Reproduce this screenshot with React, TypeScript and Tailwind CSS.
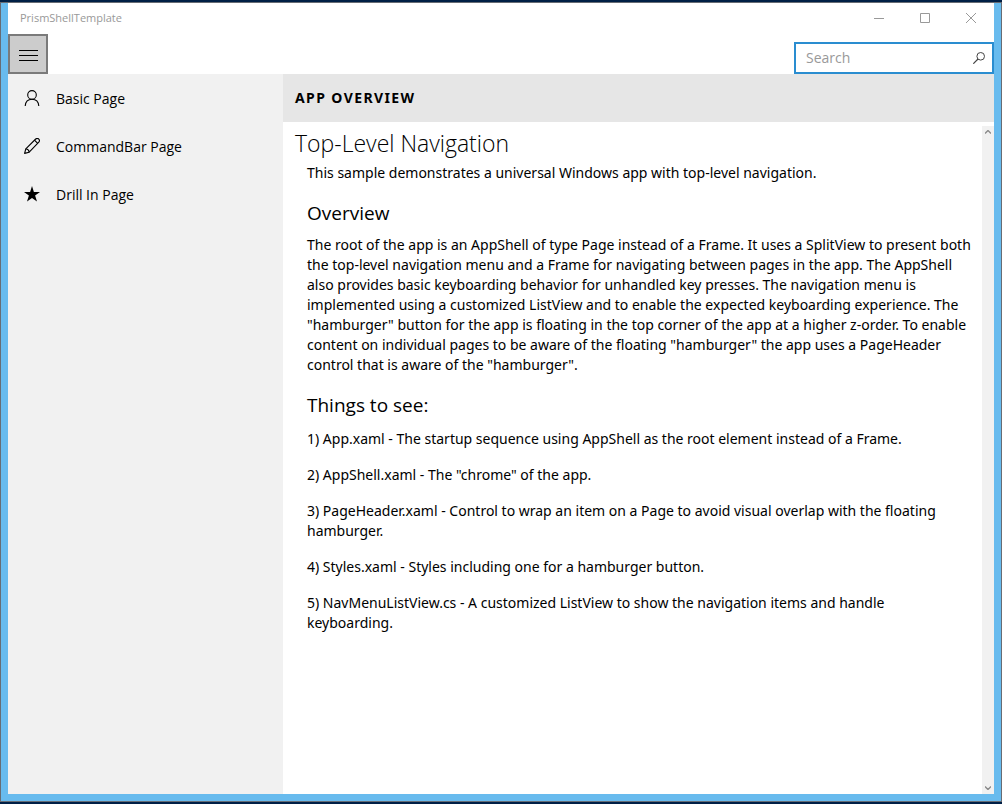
import type { ReactNode } from "react";

const navItems: { label: string; icon: ReactNode }[] = [
  {
    label: "Basic Page",
    icon: (
      <svg viewBox="0 0 16 16" className="size-4" fill="none" stroke="black" strokeWidth="1.1">
        <circle cx="8" cy="4.9" r="4.3" />
        <path d="M1.2 16C1.5 12 4.2 9.3 8 9.3s6.5 2.7 6.8 6.7" />
      </svg>
    ),
  },
  {
    label: "CommandBar Page",
    icon: (
      <svg viewBox="0 0 16 16" className="size-4" fill="none" stroke="black" strokeWidth="1.1" strokeLinejoin="round">
        <path d="M.6 15.4l1.2-4.6L11.7 1c1-.8 2.3-.7 3.100.1s.8 2.100 0 3.100L5.200 14.200z" />
        <path d="M10.500 2.200l3.200 3.200M1.800 10.800c1.800.2 3.200 1.600 3.400 3.400" />
      </svg>
    ),
  },
  {
    label: "Drill In Page",
    icon: (
      <svg viewBox="0 0 16 16" className="size-4" fill="black">
        <path d="M8 0l1.900 5.900H16l-4.900 3.700L13 15.600l-5-3.700-5 3.700 1.900-6L0 5.900h6.100z" />
      </svg>
    ),
  },
];

const overviewLines = [
  "The root of the app is an AppShell of type Page instead of a Frame. It uses a SplitView to present both",
  "the top-level navigation menu and a Frame for navigating between pages in the app. The AppShell",
  "also provides basic keyboarding behavior for unhandled key presses. The navigation menu is",
  "implemented using a customized ListView and to enable the expected keyboarding experience. The",
  '"hamburger" button for the app is floating in the top corner of the app at a higher z-order. To enable',
  'content on individual pages to be aware of the floating "hamburger" the app uses a PageHeader',
  'control that is aware of the "hamburger".',
];

const thingsToSee = [
  ["1) App.xaml - The startup sequence using AppShell as the root element instead of a Frame."],
  ['2) AppShell.xaml - The "chrome" of the app.'],
  ["3) PageHeader.xaml - Control to wrap an item on a Page to avoid visual overlap with the floating", "hamburger."],
  ["4) Styles.xaml - Styles including one for a hamburger button."],
  ["5) NavMenuListView.cs - A customized ListView to show the navigation items and handle", "keyboarding."],
];

function Paragraph({ lines }: { lines: string[] }) {
  return (
    <p>
      {lines.map((line, index) => (
        <span key={line}>
          {index > 0 && <br />}
          {line}
        </span>
      ))}
    </p>
  );
}

function TitleBar() {
  return (
    <div className="flex h-[31px] items-center justify-between pl-3">
      <span className="text-[11px] text-[#999999]">PrismShellTemplate</span>
      <div className="flex h-[30px] self-start">
        <button aria-label="Minimize" className="flex w-[46px] items-center justify-center">
          <svg viewBox="0 0 10 10" className="size-[10px]" stroke="#999999">
            <path d="M0 5.5h10" />
          </svg>
        </button>
        <button aria-label="Maximize" className="flex w-[46px] items-center justify-center">
          <svg viewBox="0 0 10 10" className="size-[10px]" fill="none" stroke="#999999">
            <path d="M.5.5h9v9h-9z" />
          </svg>
        </button>
        <button aria-label="Close" className="flex w-[46px] items-center justify-center">
          <svg viewBox="0 0 10 10" className="size-[10px]" stroke="#999999">
            <path d="M0 0l10 10M10 0L0 10" />
          </svg>
        </button>
      </div>
    </div>
  );
}

function Toolbar() {
  return (
    <div className="flex items-end justify-between">
      <button
        aria-label="Toggle menu"
        className="flex size-10 items-center justify-center border-2 border-[#7a7a7a] bg-[#cccccc]"
      >
        <svg viewBox="0 0 20 14" className="h-[14px] w-5" stroke="black">
          <path d="M1 3.5h19M1 8.5h19M1 13.5h19" />
        </svg>
      </button>
      <form className="flex h-8 w-[200px] items-center border-2 border-[#2a8dd0] pl-[10px]">
        <input
          type="text"
          aria-label="Search"
          placeholder="Search"
          className="min-w-0 flex-1 text-sm text-black outline-none placeholder:text-[#999999]"
        />
        <button type="button" aria-label="Submit search" className="flex w-[26px] items-center justify-center">
          <svg viewBox="0 0 12 12" className="size-3" fill="none" stroke="#444444">
            <circle cx="7.7" cy="4.3" r="3.8" />
            <path d="M5 7L.3 11.7" strokeWidth="1.2" />
          </svg>
        </button>
      </form>
    </div>
  );
}

function ScrollTrack() {
  return (
    <div className="mt-1 flex w-3 shrink-0 flex-col items-center justify-between bg-[#f1f1f1] py-1">
      <svg viewBox="0 0 6 4" className="h-1 w-[6px]" fill="none" stroke="#8a8a8a" strokeWidth="1.4">
        <path d="M0 3.5l3-3 3 3" />
      </svg>
      <svg viewBox="0 0 6 4" className="h-1 w-[6px]" fill="none" stroke="#8a8a8a" strokeWidth="1.4">
        <path d="M0 .5l3 3 3-3" />
      </svg>
    </div>
  );
}

export default function App() {
  return (
    <div className="flex min-h-screen flex-col bg-[#001f45] py-[2px] font-['Open_Sans','Noto_Sans',sans-serif] text-black">
      <div className="flex flex-1 flex-col border border-[#676c74] bg-[#68bbee] px-[7px] pb-[7px]">
        <div className="flex flex-1 flex-col bg-white">
          <TitleBar />
          <Toolbar />
          <div className="flex flex-1">
            <nav className="w-[275px] shrink-0 bg-[#f1f1f1]">
              <ul>
                {navItems.map((item) => (
                  <li key={item.label}>
                    <a href="#" className="flex h-12 items-center gap-4 px-4 text-sm">
                      {item.icon}
                      <span className="pt-[2px]">{item.label}</span>
                    </a>
                  </li>
                ))}
              </ul>
            </nav>
            <main className="flex min-w-0 flex-1 flex-col">
              <header className="flex h-12 items-center bg-[#e6e6e6] px-3 font-['Noto_Sans',sans-serif] text-sm font-bold tracking-widest">
                APP OVERVIEW
              </header>
              <div className="flex flex-1">
                <div className="min-w-0 flex-1 pt-[3px] pl-3">
                  <h1 className="text-[23px] leading-9 font-light">Top-Level Navigation</h1>
                  <div className="pt-[2px] pl-3 font-['Noto_Sans',sans-serif] text-sm leading-5">
                    <p>This sample demonstrates a universal Windows app with top-level navigation.</p>
                    <h2 className="mt-4 mb-2 font-['Open_Sans',sans-serif] text-[19px] leading-7">Overview</h2>
                    <Paragraph lines={overviewLines} />
                    <h2 className="mt-4 mb-[10px] font-['Open_Sans',sans-serif] text-[19px] leading-7">
                      Things to see:
                    </h2>
                    <div className="space-y-4">
                      {thingsToSee.map((lines) => (
                        <Paragraph key={lines[0]} lines={lines} />
                      ))}
                    </div>
                  </div>
                </div>
                <ScrollTrack />
              </div>
            </main>
          </div>
        </div>
      </div>
    </div>
  );
}
